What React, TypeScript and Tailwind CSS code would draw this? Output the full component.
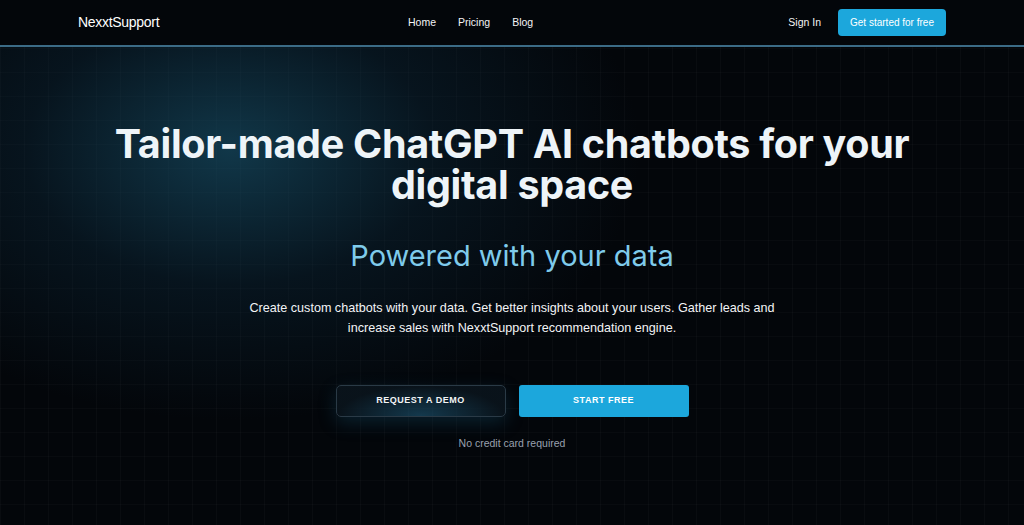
import React from 'react';

const navLinks = ['Home', 'Pricing', 'Blog'];

const App: React.FC = () => {
  return (
    <div className="relative min-h-[525px] w-full overflow-hidden bg-[#03060a] text-white font-['Inter',sans-serif]">
      {/* grid + glow backdrop */}
      <div className="pointer-events-none absolute inset-0 bg-[linear-gradient(to_right,rgba(255,255,255,0.025)_1px,transparent_1px),linear-gradient(to_bottom,rgba(255,255,255,0.02)_1px,transparent_1px)] bg-[size:24px_24px]"></div>
      <div className="pointer-events-none absolute left-[-180px] top-[-120px] h-[540px] w-[820px] rounded-full bg-[radial-gradient(closest-side,rgba(26,88,115,0.6),rgba(14,46,66,0.35)_50%,transparent)]"></div>

      <header className="relative flex h-[47px] items-center border-b-2 border-[#3b6b86] bg-[#03060a] px-[78px] font-['Liberation_Sans',Arial,sans-serif]">
        <div className="w-[300px] text-[14px] tracking-[-0.3px] text-white">NexxtSupport</div>
        <nav className="ml-[30px] flex gap-[22px] text-[10.5px] text-gray-100">
          {navLinks.map(link => (
            <a key={link} href="#">{link}</a>
          ))}
        </nav>
        <div className="ml-auto flex items-center gap-[17px]">
          <a href="#" className="text-[10.5px] text-gray-100">Sign In</a>
          <button className="h-[27px] w-[108px] rounded-[4px] bg-[#1ca7dc] text-[10px] text-white">
            Get started for free
          </button>
        </div>
      </header>

      <main className="relative flex flex-col items-center pt-[77px] text-center">
        <h1 className="text-[39.5px] font-bold leading-[41px] tracking-[-0.3px] text-[#eef4f8]">
          Tailor-made ChatGPT AI chatbots for your
          <br />
          digital space
        </h1>
        <h2 className="mt-[32px] text-[29px] font-normal leading-[36px] text-[#7fcbeb]">
          Powered with your data
        </h2>
        <p className="mt-[24px] w-[540px] font-['Liberation_Sans',Arial,sans-serif] text-[12.6px] leading-[20px] text-gray-100">
          Create custom chatbots with your data. Get better insights about your users. Gather leads and increase sales with NexxtSupport recommendation engine.
        </p>
        <div className="mt-[47px] flex gap-[13px]">
          <button className="h-[32px] w-[170px] rounded-[5px] border border-[#2a3a46] bg-[radial-gradient(ellipse_at_50%_100%,rgba(40,120,160,0.45),rgba(10,20,28,0.9)_70%)] font-['Liberation_Sans',Arial,sans-serif] text-[9px] font-bold uppercase tracking-[0.5px] text-gray-100 shadow-[0_6px_18px_rgba(30,110,150,0.25)]">
            Request a demo
          </button>
          <button className="h-[32px] w-[170px] rounded-[3px] bg-[#1ca7dc] font-['Liberation_Sans',Arial,sans-serif] text-[9px] font-bold uppercase tracking-[0.5px] text-white">
            Start free
          </button>
        </div>
        <p className="mt-[19px] font-['Liberation_Sans',Arial,sans-serif] text-[10.5px] text-gray-400">No credit card required</p>
      </main>
    </div>
  );
};

export default App;
